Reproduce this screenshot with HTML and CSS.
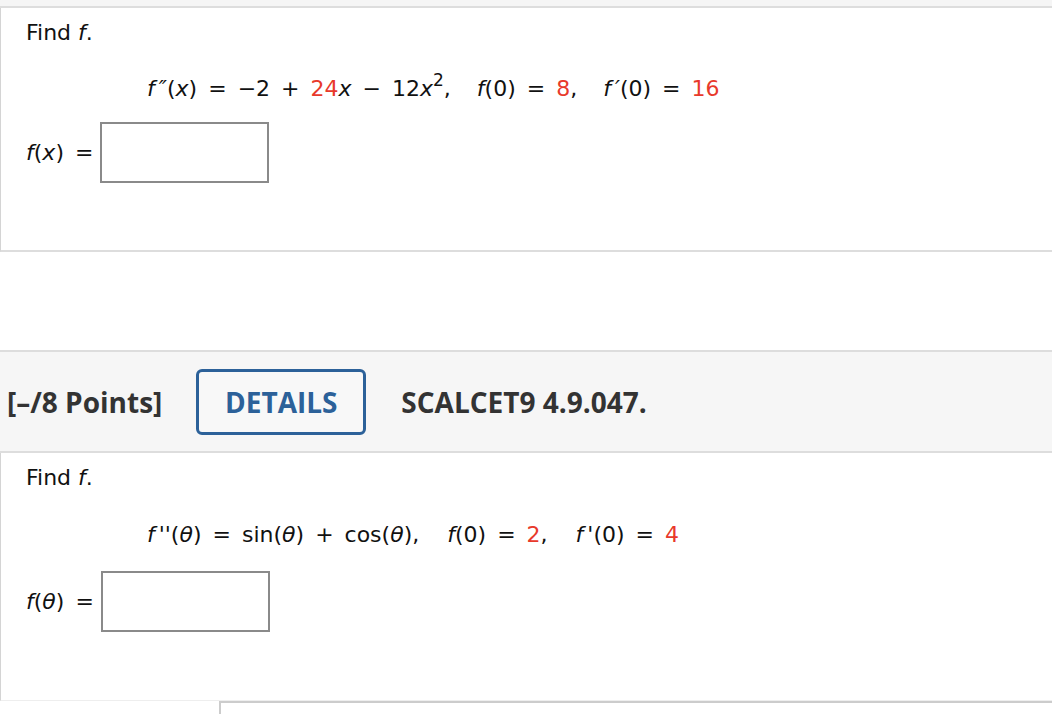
FILE: index.html
```html
<!DOCTYPE html>
<html>
<head>
<meta charset="utf-8">
<link rel="stylesheet" href="styles.css">
</head>
<body>
<div class="topstrip"></div>
<div class="card card1">
  <div class="prompt">Find <i>f</i>.</div>
  <div class="eq eq1">
    <span><i>f</i><span class="pr">″</span>(<i>x</i>)</span><span class="op">=</span><span>−2</span><span class="op">+</span><span><span class="red">24</span><i>x</i></span><span class="op">−</span><span>12<i>x</i><sup>2</sup>,</span><span class="gap"><i>f</i>(0)</span><span class="op">=</span><span><span class="red">8</span>,</span><span class="gap"><i>f</i><span class="pr">′</span>(0)</span><span class="op">=</span><span class="red">16</span>
  </div>
  <div class="answer">
    <span class="label"><i>f</i>(<i>x</i>)</span><span class="op">=</span>
    <span class="box"></span>
  </div>
</div>
<div class="spacer"></div>
<div class="header">
  <span class="points">[–/8 Points]</span>
  <span class="details">DETAILS</span>
  <span class="code">SCALCET9 4.9.047.</span>
</div>
<div class="card card2">
  <div class="prompt">Find <i>f</i>.</div>
  <div class="eq eq2">
    <span><i>f</i><span class="pr">''</span>(<i>θ</i>)</span><span class="op">=</span><span>sin(<i>θ</i>)</span><span class="op">+</span><span>cos(<i>θ</i>),</span><span class="gap"><i>f</i>(0)</span><span class="op">=</span><span><span class="red">2</span>,</span><span class="gap"><i>f</i><span class="pr">'</span>(0)</span><span class="op">=</span><span class="red">4</span>
  </div>
  <div class="answer">
    <span class="label"><i>f</i>(<i>θ</i>)</span><span class="op">=</span>
    <span class="box"></span>
  </div>
</div>
<div class="footer">
  <div class="helpbox"></div>
</div>
</body>
</html>
```

FILE: styles.css
```css
html, body {
  margin: 0;
  padding: 0;
  background: #ffffff;
}
body {
  width: 1052px;
  height: 714px;
  overflow: hidden;
  font-family: "DejaVu Sans", Verdana, sans-serif;
  font-size: 22px;
  color: #111111;
}
.topstrip {
  height: 6px;
  background: #f5f5f5;
  border-bottom: 2px solid #dddddd;
}
.card {
  border-left: 1px solid #d4d4d4;
  padding-left: 25px;
  box-sizing: border-box;
}
.card1 {
  height: 244px;
  border-bottom: 2px solid #dddddd;
  padding-top: 12px;
}
.card2 {
  height: 248px;
  border-bottom: 1px solid #eeeeee;
  padding-top: 12px;
}
.prompt {
  line-height: 26px;
}
i {
  font-style: oblique;
}
.pr {
  margin-left: 4px;
  font-style: oblique;
}
.eq {
  margin-left: 121px;
  line-height: 26px;
  display: flex;
  align-items: baseline;
  white-space: pre;
}
.eq1 {
  margin-top: 30px;
}
.eq2 {
  margin-top: 31px;
}
.eq .op {
  margin: 0 11px;
}
.eq1 .gap {
  margin-left: 26px;
}
.eq2 .gap {
  margin-left: 28px;
}
sup {
  font-size: 17px;
  line-height: 0;
  vertical-align: 10px;
}
.red {
  color: #e8392b;
}
.answer {
  display: flex;
  align-items: center;
}
.card1 .answer {
  margin-top: 20px;
}
.card2 .answer {
  margin-top: 23px;
}
.answer .op {
  margin-left: 11px;
  margin-right: 7px;
}
.box {
  display: block;
  width: 169px;
  height: 61px;
  box-sizing: border-box;
  border: 2px solid #8a8a8a;
  background: #ffffff;
}
.spacer {
  height: 98px;
}
.header {
  height: 103px;
  box-sizing: border-box;
  border-top: 2px solid #dddddd;
  border-bottom: 2px solid #dddddd;
  background: #f6f6f6;
  display: flex;
  align-items: center;
  padding-left: 7px;
  font-family: "Open Sans", "Liberation Sans", sans-serif;
  font-weight: 700;
  font-size: 28px;
  color: #333333;
}
.details {
  margin-left: 34px;
  border: 3px solid #2c6199;
  border-radius: 6px;
  color: #2c6199;
  height: 66px;
  box-sizing: border-box;
  width: 170px;
  display: flex;
  align-items: center;
  justify-content: center;
  background: #f8f8f8;
}
.code {
  margin-left: 35px;
}
.footer {
  height: 20px;
  padding-left: 219px;
}
.helpbox {
  height: 20px;
  border-top: 2px solid #cccccc;
  border-left: 2px solid #cccccc;
}
```
